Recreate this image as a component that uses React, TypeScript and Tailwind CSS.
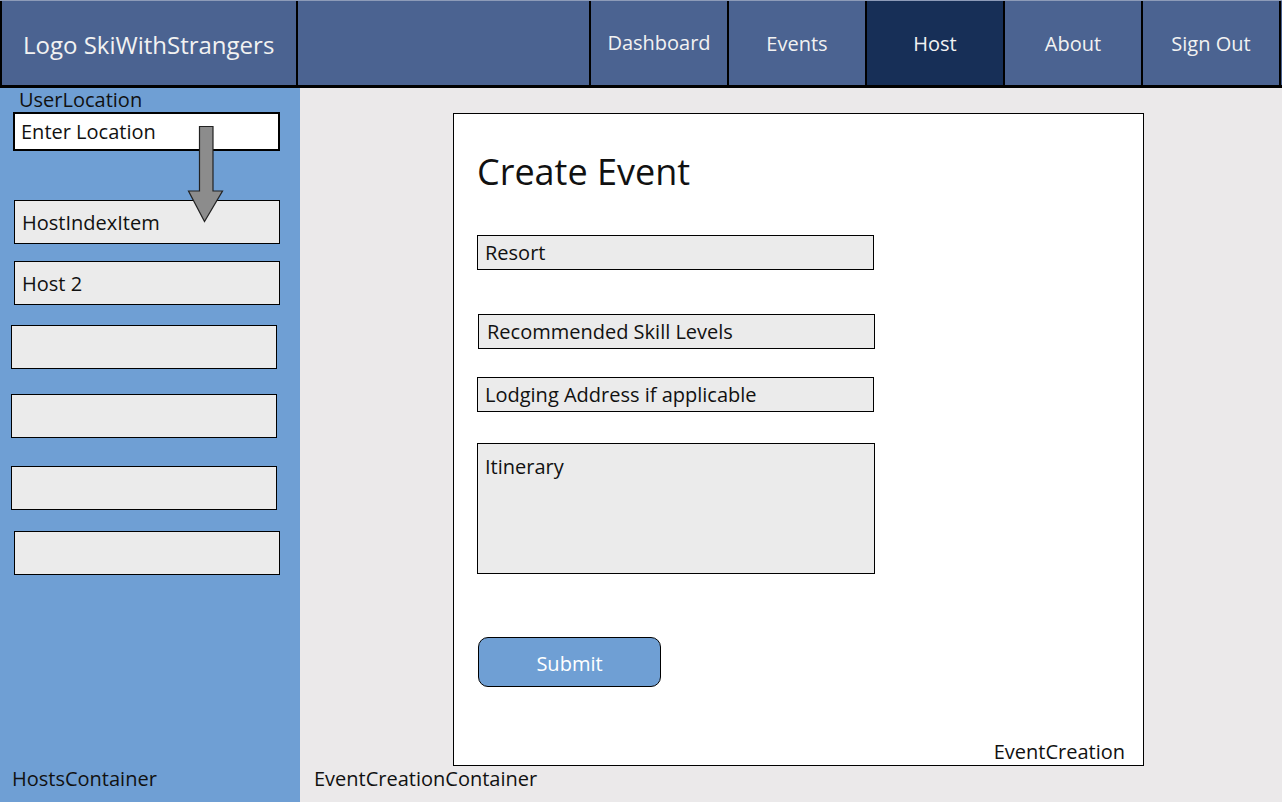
import React from 'react';

const navItems = ['Dashboard', 'Events', 'Host', 'About', 'Sign Out'];

const hostItems = [
    { label: 'HostIndexItem', cls: 'mt-[49px] ml-[14px]' },
    { label: 'Host 2', cls: 'mt-[17px] ml-[14px]' },
    { label: '', cls: 'mt-[20px] ml-[11px]' },
    { label: '', cls: 'mt-[25px] ml-[11px]' },
    { label: '', cls: 'mt-[28px] ml-[11px]' },
    { label: '', cls: 'mt-[21px] ml-[14px]' },
];

const Header: React.FC = () => {
    return (
        <div className="flex h-[88px] shrink-0 border-t border-b-[3px] border-t-[#8d9bb8] border-b-black bg-[#4b6391] text-[#f2f2f2]">
            <div className="flex w-[298px] items-center border-x-2 border-black pl-[21px] pt-[3px] text-[24px]">
                Logo SkiWithStrangers
            </div>
            <div className="w-[293px] border-r-2 border-black" />
            {navItems.map((item) => (
                <div
                    key={item}
                    className={`flex w-[138px] items-center justify-center border-r-2 border-black text-[20px] ${item === 'Dashboard' ? '' : 'pt-[2px]'} ${item === 'Host' ? 'bg-[#172f57]' : ''}`}
                >
                    {item}
                </div>
            ))}
        </div>
    );
};

const HostsContainer: React.FC = () => {
    return (
        <div className="relative flex w-[300px] flex-col bg-[#6f9fd4] text-[20px] leading-[24px] text-[#111]">
            <div className="pl-[19px]">UserLocation</div>
            <div className="ml-[13px] flex h-[39px] w-[267px] items-center border-2 border-black bg-white pl-[6px]">
                Enter Location
            </div>
            {hostItems.map((item, i) => (
                <div
                    key={i}
                    className={`flex h-[44px] w-[266px] items-center border border-black bg-[#ebebeb] pl-[7px] pt-[1px] ${item.cls}`}
                >
                    {item.label}
                </div>
            ))}
            <div className="mt-auto pb-[11px] pl-[12px]">HostsContainer</div>

            {/* arrow from location input down to the list */}
            <svg className="absolute left-[186px] top-[36px]" width="40" height="100" viewBox="0 0 40 100">
                <path
                    d="M13.5 2.5 H27 V67 H36.5 L18.5 97.5 L2.5 67 H13.5 Z"
                    fill="#8c8c8c"
                    stroke="#222"
                    strokeWidth="1.2"
                />
            </svg>
        </div>
    );
};

const Field: React.FC<{ label: string; cls: string }> = ({ label, cls }) => (
    <div className={`flex h-[35px] w-[397px] items-center border border-black bg-[#ebebeb] pl-[7px] ${cls}`}>
        {label}
    </div>
);

const EventCreation: React.FC = () => {
    return (
        <div className="ml-[153px] mt-[25px] flex h-[653px] w-[691px] flex-col border border-black bg-white pl-[23px] text-[20px] leading-[24px] text-[#111]">
            <h1 className="mt-[34px] text-[36px] leading-[48px]">Create Event</h1>
            <Field label="Resort" cls="mt-[39px]" />
            <Field label="Recommended Skill Levels" cls="mt-[44px] ml-[1px] h-[34px] pl-[8px]" />
            <Field label="Lodging Address if applicable" cls="mt-[28px] h-[34px]" />
            <div className="mt-[31px] h-[131px] w-[398px] border border-black bg-[#ebebeb] pl-[7px] pt-[11px]">
                Itinerary
            </div>
            <button className="ml-[1px] mt-[63px] h-[50px] w-[183px] rounded-[10px] border border-black bg-[#6f9fd4] pt-[3px] text-white">
                Submit
            </button>
            <div className="mt-auto self-end pb-[1px] pr-[18px]">EventCreation</div>
        </div>
    );
};

const App: React.FC = () => {
    return (
        <div className="flex h-[802px] w-[1282px] flex-col overflow-hidden font-['Open_Sans',sans-serif]">
            <Header />
            <div className="flex flex-1">
                <HostsContainer />
                <div className="flex flex-1 flex-col bg-[#ebe9ea] text-[20px] leading-[24px] text-[#111]">
                    <EventCreation />
                    <div className="mt-auto pb-[11px] pl-[14px]">EventCreationContainer</div>
                </div>
            </div>
        </div>
    );
};

export default App;
